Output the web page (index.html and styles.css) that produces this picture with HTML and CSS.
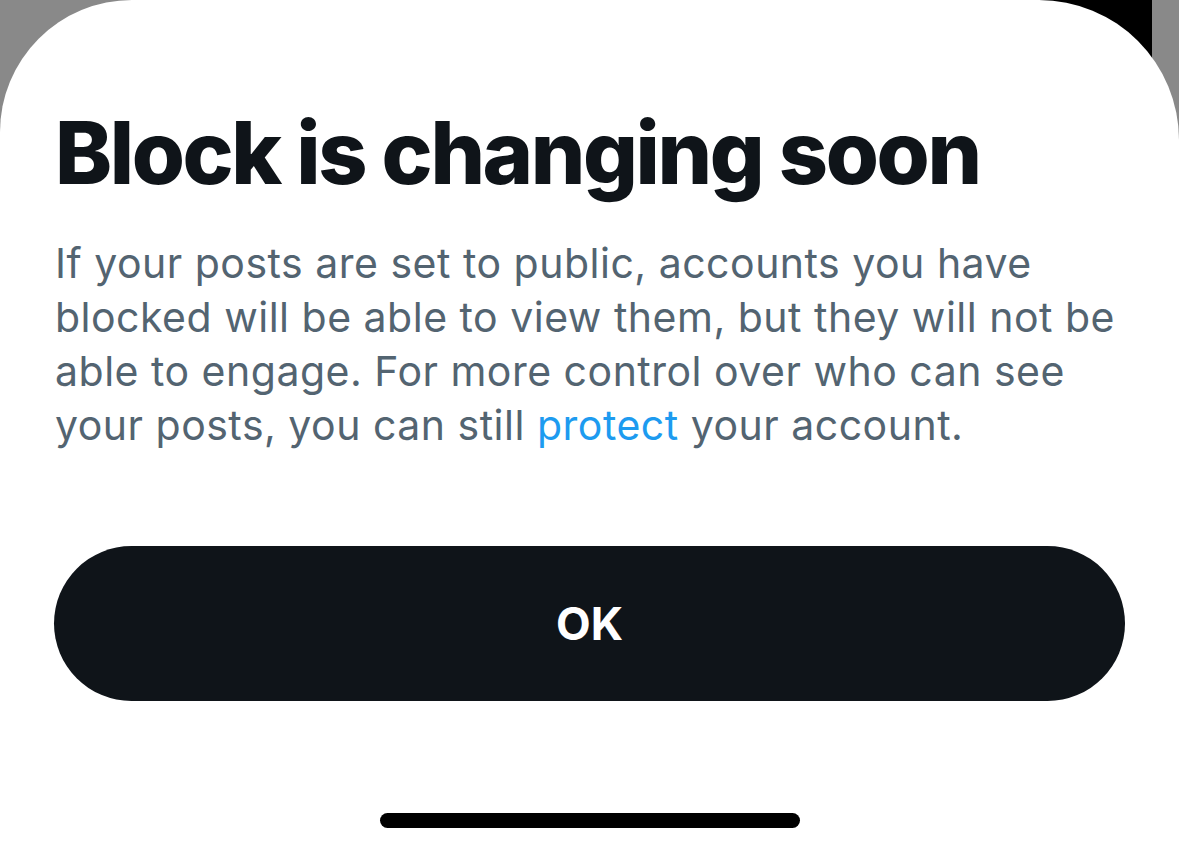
FILE: index.html
```html
<!DOCTYPE html>
<html lang="en">
<head>
  <meta charset="UTF-8">
  <title>Block is changing soon</title>
  <link rel="stylesheet" href="styles.css">
</head>
<body>

  <div class="backdrop-bar"></div>

  <div class="sheet">
    <h1 class="title">Block is changing soon</h1>
    <p class="text">
      If your posts are set to public, accounts you have<br>
      blocked will be able to view them, but they will not be<br>
      able to engage. For more control over who can see<br>
      your posts, you can still <a href="#">protect</a> your account.
    </p>
    <button class="ok">OK</button>
    <div class="home-indicator"></div>
  </div>

</body>
</html>
```

FILE: styles.css
```css
body {
  margin: 0;
  height: 852px;
  overflow: hidden;
  background: #898989;
  font-family: Inter, "Noto Sans", sans-serif;
  position: relative;
}

/* dark strip of the page under the sheet, top right */
.backdrop-bar {
  position: absolute;
  top: 0;
  left: 960px;
  width: 192px;
  height: 60px;
  background: #000;
}

.sheet {
  position: relative;
  height: 852px;
  box-sizing: border-box;
  background: #fff;
  border-radius: 132px 140px 0 0;
  padding: 0 54px 24px 55px;
  display: flex;
  flex-direction: column;
}

.title {
  margin: 110px 0 0;
  font-size: 86px;
  font-weight: 800;
  line-height: 1;
  letter-spacing: -2.4px;
  color: #0f1419;
}

.text {
  margin: 40px 0 0;
  font-size: 41px;
  line-height: 54px;
  letter-spacing: 0.5px;
  color: #536471;
}

.text a {
  color: #1d9bf0;
  text-decoration: none;
}

.ok {
  margin: 94px 0 0 -1px;
  height: 155px;
  border: none;
  border-radius: 78px;
  background: #0f1419;
  color: #fff;
  font-family: Inter, "Noto Sans", sans-serif;
  font-size: 45px;
  font-weight: 700;
  cursor: pointer;
}

.home-indicator {
  margin: auto auto 0;
  width: 420px;
  height: 15px;
  border-radius: 8px;
  background: #000;
}
```
